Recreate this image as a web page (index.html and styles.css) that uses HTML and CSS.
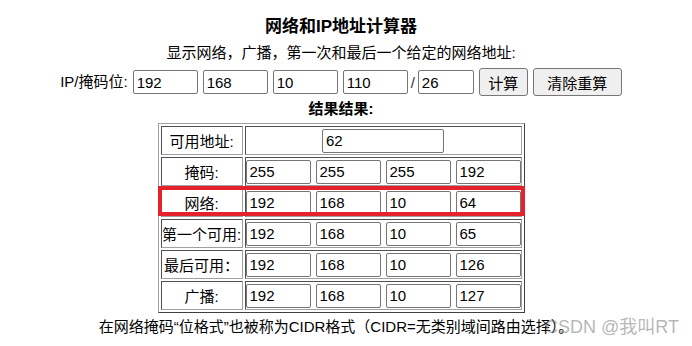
FILE: index.html
```html
<!DOCTYPE html>
<html lang="zh-CN">
<head>
<meta charset="utf-8">
<title>网络和IP地址计算器</title>
<link rel="stylesheet" href="styles.css">
</head>
<body>
<div class="page">
  <h3 class="title">网络和IP地址计算器</h3>
  <p class="intro">显示网络，广播，第一次和最后一个给定的网络地址:</p>
  <form class="ip-row">
    <span class="ip-label">IP/掩码位:</span>
    <input class="field" type="text" value="192">
    <input class="field" type="text" value="168">
    <input class="field" type="text" value="10">
    <input class="field" type="text" value="110">
    <span class="slash">/</span>
    <input class="field field-mask" type="text" value="26">
    <button type="button" class="btn btn-calc">计算</button>
    <button type="button" class="btn btn-reset">清除重算</button>
  </form>
  <p class="result-title">结果结果:</p>
  <div class="table-wrap">
    <table class="result">
      <tr>
        <td class="label">可用地址:</td>
        <td class="values"><input class="field field-count" type="text" value="62"></td>
      </tr>
      <tr>
        <td class="label">掩码:</td>
        <td class="values"><div class="quad"><input class="field" type="text" value="255"><input class="field" type="text" value="255"><input class="field" type="text" value="255"><input class="field" type="text" value="192"></div></td>
      </tr>
      <tr>
        <td class="label">网络:</td>
        <td class="values"><div class="quad"><input class="field" type="text" value="192"><input class="field" type="text" value="168"><input class="field" type="text" value="10"><input class="field" type="text" value="64"></div></td>
      </tr>
      <tr>
        <td class="label">第一个可用:</td>
        <td class="values"><div class="quad"><input class="field" type="text" value="192"><input class="field" type="text" value="168"><input class="field" type="text" value="10"><input class="field" type="text" value="65"></div></td>
      </tr>
      <tr>
        <td class="label">最后可用：</td>
        <td class="values"><div class="quad"><input class="field" type="text" value="192"><input class="field" type="text" value="168"><input class="field" type="text" value="10"><input class="field" type="text" value="126"></div></td>
      </tr>
      <tr>
        <td class="label">广播:</td>
        <td class="values"><div class="quad"><input class="field" type="text" value="192"><input class="field" type="text" value="168"><input class="field" type="text" value="10"><input class="field" type="text" value="127"></div></td>
      </tr>
    </table>
    <div class="highlight"></div>
  </div>
  <p class="note">在网络掩码“位格式”也被称为CIDR格式（CIDR=无类别域间路由选择）。</p>
  <div class="watermark">CSDN @我叫RT</div>
</div>
</body>
</html>
```

FILE: styles.css
```css
html, body {
  margin: 0;
  padding: 0;
  background: #ffffff;
}

body {
  font-family: "Liberation Sans", "Noto Sans CJK SC", sans-serif;
  font-size: 15px;
  color: #000;
}

.page {
  position: relative;
  width: 682px;
  height: 346px;
  text-align: center;
}

.title {
  margin: 0;
  padding-top: 16px;
  font-size: 17px;
  line-height: 22px;
  font-weight: bold;
}

.intro {
  margin: 5px 0 0;
  line-height: 20px;
}

.ip-row {
  display: flex;
  justify-content: center;
  align-items: center;
  gap: 5px;
  height: 28px;
  margin-top: 5px;
}

.ip-label {
  line-height: 20px;
}

.field {
  box-sizing: border-box;
  width: 65px;
  height: 24px;
  margin: 0;
  padding: 0 3px;
  border: 1px solid #767676;
  border-radius: 2px;
  font-family: "Liberation Sans", "Noto Sans CJK SC", sans-serif;
  font-size: 15px;
  color: #000;
  background: #fff;
}

.field-mask {
  width: 56px;
}

.slash {
  margin: 0 -2px;
  color: #333;
}

.btn {
  box-sizing: border-box;
  height: 28px;
  margin: 0;
  padding: 0;
  border: 1px solid #767676;
  border-radius: 3px;
  background: #efefef;
  font-family: "Liberation Sans", "Noto Sans CJK SC", sans-serif;
  font-size: 15px;
  color: #000;
}

.btn-calc {
  width: 49px;
}

.btn-reset {
  width: 89px;
}

.result-title {
  margin: 3px 0 0;
  line-height: 20px;
  font-weight: bold;
}

.table-wrap {
  position: relative;
  width: 367px;
  margin: 4px auto 0;
}

.result {
  border-collapse: separate;
  border-spacing: 2px;
  border: 1px solid;
  border-color: #a0a0a0 #404040 #404040 #a0a0a0;
}

.result td {
  box-sizing: border-box;
  height: 29px;
  padding: 0;
  border: 1px solid;
  border-color: #505050 #a0a0a0 #a0a0a0 #505050;
}

.label {
  width: 82px;
  text-align: center;
  white-space: nowrap;
}

.values {
  width: 277px;
  text-align: center;
}

.field-count {
  width: 122px;
  vertical-align: middle;
}

.quad {
  display: flex;
  justify-content: space-between;
  align-items: center;
}

.highlight {
  position: absolute;
  left: 0;
  top: 63px;
  width: 367px;
  height: 30px;
  box-sizing: border-box;
  border: 4px solid #e5212b;
  pointer-events: none;
}

.note {
  margin: 4px 0 0;
  line-height: 20px;
  padding-right: 10px;
}

.watermark {
  position: absolute;
  left: 545px;
  top: 316px;
  font-size: 18px;
  line-height: 22px;
  color: rgba(120, 120, 120, 0.55);
  white-space: nowrap;
}
```
